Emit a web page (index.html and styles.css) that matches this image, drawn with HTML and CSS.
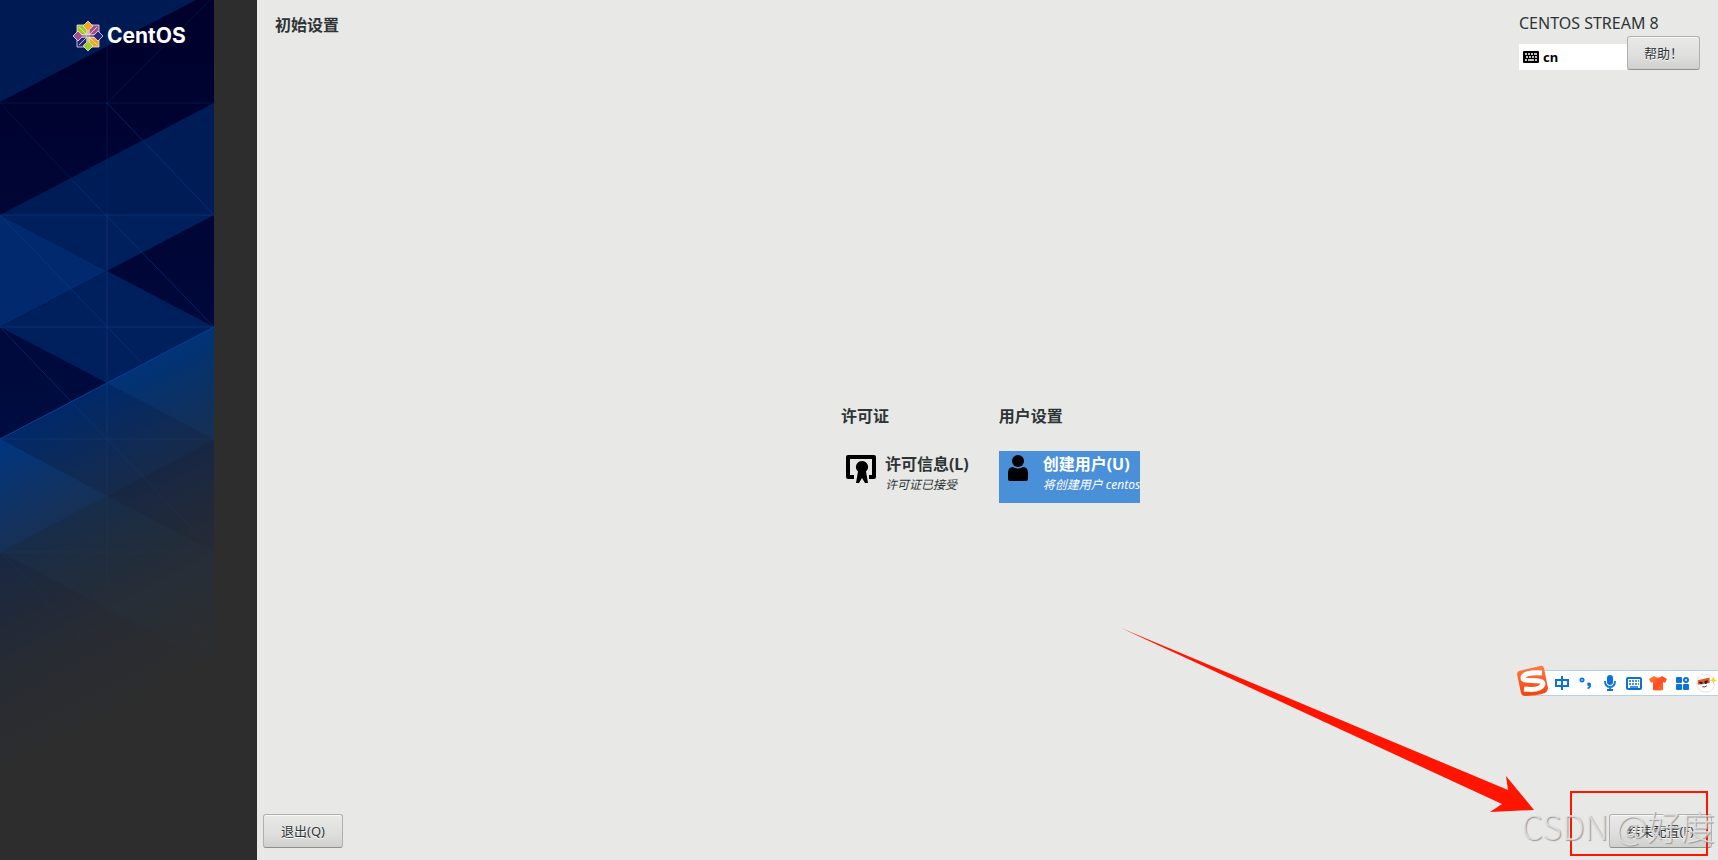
FILE: index.html
```html
<!DOCTYPE html>
<html lang="zh-CN">
<head>
    <meta charset="UTF-8">
    <meta name="viewport" content="width=device-width, initial-scale=1.0">
    <title>初始设置</title>
    <link rel="stylesheet" href="styles.css">
</head>
<body>
    <div class="app">
        <aside class="sidebar">
            <svg class="sidebar-art" viewBox="0 0 214 767" preserveAspectRatio="none" aria-hidden="true">
                <defs>
                    <linearGradient id="fade" gradientUnits="userSpaceOnUse" x1="100" y1="387" x2="239" y2="653">
                        <stop offset="0" stop-color="#2d2d2d" stop-opacity="0"/>
                        <stop offset="0.27" stop-color="#2d2d2d" stop-opacity="0.42"/>
                        <stop offset="0.5" stop-color="#2d2d2d" stop-opacity="0.7"/>
                        <stop offset="0.7" stop-color="#2d2d2d" stop-opacity="0.87"/>
                        <stop offset="1" stop-color="#2d2d2d"/>
                    </linearGradient>
                    <linearGradient id="night" x1="0" y1="0" x2="0" y2="1">
                        <stop offset="0" stop-color="#00002b"/>
                        <stop offset="1" stop-color="#000c40"/>
                    </linearGradient>
                </defs>
                <rect width="214" height="440" fill="url(#night)"/>
                <path fill="#001b53" d="M0 0H196L0 102z"/>
                <path fill="#001c57" d="M0 215L214 103V215z"/>
                <path fill="#001f5d" d="M0 215H214L107 271z"/>
                <path fill="#002a6d" d="M0 215L107 271L0 327z"/>
                <path fill="#001f5d" d="M0 327L107 271L214 327L107 383z"/>
                <path fill="#003377" d="M0 439L214 327V767H0z"/>
                <path fill="#002969" d="M0 439L107 383L214 439L107 496z"/>
                <path fill="#00205a" d="M107 496L214 439V552z"/>
                <path fill="#003580" d="M0 439L107 496L0 552z"/>
                <path fill="#002c66" d="M0 552L107 496L214 552L107 608z"/>
                <path fill="#00205a" d="M0 552L214 664V767H0z"/>
                <g fill="none" stroke="#0b4089" stroke-opacity="0.5">
                    <path d="M107 215V608M0 215H214M0 327H214M0 439H214M0 552H214"/>
                    <path d="M107 103L214 215M72 180L214 327M0 215L142 363M0 327L107 439L214 552M0 552L107 664"/>
                    <path stroke-opacity="0.25" d="M107 40V215M0 103H214M0 103L72 180M107 103L210 0"/>
                </g>
                <path fill="none" stroke="#0b4191" d="M0 439L214 327"/>
                <path fill="url(#fade)" d="M0 439L214 327V767H0z"/>
            </svg>
            <div class="brand">
                <svg class="brand-mark" viewBox="0 0 32 32" aria-hidden="true">
                    <g stroke="#efe3ee" stroke-width="0.8">
                        <path fill="#9ccd2a" d="M5 5H15V15H5z"/>
                        <path fill="#a14f8c" d="M17 5H27V15H17z"/>
                        <path fill="#262577" d="M5 17H15V27H5z"/>
                        <path fill="#efa724" d="M17 17H27V27H17z"/>
                        <path fill="#efa724" d="M16 1L21 6L17 10V15H15V10L11 6z"/>
                        <path fill="#262577" d="M31 16L26 21L22 17H17V15H22L26 11z"/>
                        <path fill="#9ccd2a" d="M16 31L11 26L15 22V17H17V22L21 26z"/>
                        <path fill="#a14f8c" d="M1 16L6 11L10 15H15V17H10L6 21z"/>
                        <path fill="none" d="M7 7L14 14M25 7L18 14M7 25L14 18M25 25L18 18"/>
                    </g>
                </svg>
                <span class="brand-name">CentOS</span>
            </div>
        </aside>

        <main class="main">
            <header class="header">
                <h1 class="title">初始设置</h1>
                <div class="header-side">
                    <div class="distro">CENTOS STREAM 8</div>
                    <div class="header-tools">
                        <div class="layout-indicator">
                            <svg width="16" height="12" viewBox="0 0 16 12" aria-hidden="true">
                                <rect width="16" height="12" rx="1"/>
                                <path stroke="#fff" stroke-width="1.6" d="M2 3H4M5 3H7M8 3H10M11 3H14M3 6H5M6 6H8M9 6H11M12 6H14M2 9H4M5 9H11M12 9H14"/>
                            </svg>
                            <span>cn</span>
                        </div>
                        <button type="button" class="btn">帮助！</button>
                    </div>
                </div>
            </header>

            <div class="hub">
                <section class="category">
                    <h2>许可证</h2>
                    <button type="button" class="spoke">
                        <svg class="spoke-icon" viewBox="0 0 32 32" aria-hidden="true">
                            <path d="M3 2H29Q31 2 31 4V24Q31 26 29 26H24V22H27V6H5V22H9V26H3Q1 26 1 24V4Q1 2 3 2z"/>
                            <path d="M17 8a6 6 0 0 1 4 10.500L23 30H20L17 25L14 30H11L13 18.500A6 6 0 0 1 17 8z"/>
                        </svg>
                        <span class="spoke-text">
                            <span class="spoke-title">许可信息(L)</span>
                            <span class="spoke-status">许可证已接受</span>
                        </span>
                    </button>
                </section>
                <section class="category">
                    <h2>用户设置</h2>
                    <button type="button" class="spoke selected">
                        <svg class="spoke-icon" viewBox="0 0 32 32" aria-hidden="true">
                            <circle cx="15" cy="8" r="6"/>
                            <path d="M5 20Q5 14 10 14Q15 17 20 14Q25 14 25 20V26Q25 28 23 28H7Q5 28 5 26z"/>
                        </svg>
                        <span class="spoke-text">
                            <span class="spoke-title">创建用户(U)</span>
                            <span class="spoke-status">将创建用户 centos</span>
                        </span>
                    </button>
                </section>
            </div>

            <footer class="footer">
                <button type="button" class="btn">退出(Q)</button>
                <button type="button" class="btn">结束配置(F)</button>
            </footer>
        </main>
    </div>

    <!-- input method toolbar -->
    <div class="ime">
        <svg class="ime-logo" viewBox="0 0 34 32" aria-hidden="true">
            <defs>
                <linearGradient id="ime-red" x1="0" y1="0" x2="0" y2="1">
                    <stop offset="0" stop-color="#ff7a45"/>
                    <stop offset="1" stop-color="#f5420b"/>
                </linearGradient>
                <linearGradient id="ime-shirt" x1="0" y1="0" x2="1" y2="1">
                    <stop offset="0" stop-color="#ff8a2a"/>
                    <stop offset="0.5" stop-color="#ff4a2a"/>
                    <stop offset="1" stop-color="#ff7a1a"/>
                </linearGradient>
            </defs>
            <path fill="url(#ime-red)" d="M3 6L24 1Q27 0 28 3L32 23Q32 26 29 28Q20 31 9 31Q6 31 5 28L1 9Q1 7 3 6z"/>
            <path fill="none" stroke="#fff" stroke-width="5" d="M26 8Q7 7 7 13C7 18 27 13 27 19Q25 26 8 24"/>
        </svg>
        <button type="button" class="ime-btn" aria-label="中文">
            <svg viewBox="0 0 16 16"><path fill="none" stroke="#0b72d8" stroke-width="2" d="M2 5H14V11H2zM8 1V15"/></svg>
        </button>
        <button type="button" class="ime-btn" aria-label="标点">
            <svg viewBox="0 0 16 16"><circle cx="4" cy="5" r="1.700" fill="none" stroke="#0b72d8" stroke-width="1.800"/><path fill="#0b72d8" d="M9 9a2 2 0 1 1 4 1Q13 13 10 14L9 13Q11 12 11 11Q9 11 9 9z"/></svg>
        </button>
        <button type="button" class="ime-btn" aria-label="语音">
            <svg viewBox="0 0 16 16"><rect x="5" y="0" width="6" height="10" rx="3" fill="#0b72d8"/><path fill="none" stroke="#0b72d8" stroke-width="1.800" d="M3 6Q3 12 8 12Q13 12 13 6M8 12V16M5 15H11"/></svg>
        </button>
        <button type="button" class="ime-btn" aria-label="键盘">
            <svg viewBox="0 0 16 16"><rect x="1" y="3" width="14" height="11" rx="1" fill="#fff" stroke="#0b72d8" stroke-width="2"/><path stroke="#0b72d8" stroke-width="1.600" d="M3 6H5M6 6H8M9 6H11M12 6H13M3 9H5M6 9H8M9 9H11M12 9H13M4 12H12"/></svg>
        </button>
        <button type="button" class="ime-btn" aria-label="皮肤">
            <svg class="ime-wide" viewBox="0 0 18 16"><path fill="url(#ime-shirt)" d="M5 1Q9 4 13 1L18 4L16 8L14 7V15Q9 16 4 15V7L2 8L0 4z"/></svg>
        </button>
        <button type="button" class="ime-btn" aria-label="工具箱">
            <svg viewBox="0 0 16 16"><g fill="#0b72d8"><rect x="2" y="2" width="6" height="6" rx="1"/><rect x="2" y="9" width="6" height="6" rx="1"/><rect x="9" y="9" width="6" height="6" rx="1"/></g><circle cx="12" cy="5" r="2" fill="none" stroke="#0b72d8" stroke-width="2"/></svg>
        </button>
        <button type="button" class="ime-btn" aria-label="智能助手">
            <svg class="ime-avatar" viewBox="0 0 24 22"><path fill="#fff" stroke="#e6dede" d="M4 4L7 1L10 3Q14 0 18 4Q22 8 21 14Q19 21 12 21Q3 21 2 13Q1 8 4 4z"/><path fill="#e2582a" d="M3 8L16 5V11Q9 12 3 13z"/><path fill="#222" d="M4 10L8 9.500L8 12.500Q5 12 4 10zM10 9L14 8Q14 12 11 12z"/><path fill="none" stroke="#333" d="M8 15Q11 16 13 14"/><path fill="#ffd21c" d="M20 4L21 7L24 8L21 9L20 12L19 9L16 8L19 7z"/></svg>
        </button>
    </div>

    <!-- annotations -->
    <svg class="arrow" width="414" height="188" viewBox="0 0 414 188" aria-hidden="true">
        <path fill="#ff1500" d="M1 2L388 164L386 150L414 184L370 186L382 178z"/>
    </svg>
    <div class="highlight"></div>
    <div class="watermark">CSDN @好度</div>
</body>
</html>
```

FILE: styles.css
```css
* {
    box-sizing: border-box;
}
body {
    margin: 0;
    font-family: "Noto Sans", "Noto Sans CJK SC", sans-serif;
    font-size: 13px;
    color: #2e3436;
    background-color: #e8e8e6;
    overflow: hidden;
}
button {
    font-family: inherit;
    color: inherit;
    cursor: pointer;
}
h1, h2 {
    margin: 0;
    font-size: 16px;
    line-height: 24px;
    font-weight: bold;
}
.app {
    display: flex;
    min-height: 100vh;
}

/* sidebar */
.sidebar {
    display: grid;
    grid-template-rows: auto 1fr;
    align-items: start;
    flex: 0 0 257px;
    background-color: #2d2d2d;
}
.sidebar-art {
    grid-area: 1 / 1 / 3 / 2;
    width: 214px;
    height: 767px;
}
.brand {
    grid-area: 1 / 1;
    display: flex;
    align-items: center;
    gap: 3px;
    padding: 20px 0 0 72px;
    z-index: 1;
}
.brand-mark {
    width: 32px;
    height: 32px;
}
.brand-name {
    font-family: Inter, sans-serif;
    font-size: 21px;
    line-height: 32px;
    font-weight: 700;
    color: #ffffff;
}

/* main */
.main {
    display: flex;
    flex: 1;
    flex-direction: column;
    min-width: 0;
}
.header {
    display: flex;
    justify-content: space-between;
    padding: 13px 18px 0;
}
.distro {
    font-size: 16px;
    line-height: 20px;
}
.header-tools {
    display: flex;
    align-items: flex-end;
    margin-top: 3px;
}
.layout-indicator {
    display: flex;
    align-items: center;
    gap: 4px;
    width: 108px;
    height: 26px;
    padding: 0 4px;
    font-weight: bold;
    color: #000000;
    background-color: #ffffff;
}
.btn {
    height: 34px;
    padding: 0 16px;
    font-size: 13px;
    line-height: 20px;
    white-space: nowrap;
    text-shadow: 0 1px #ffffff;
    background-image: linear-gradient(#e9e9e8, #dededd 60%, #d0d0ce);
    border: 1px solid #b0b0ae;
    border-bottom-color: #8f8f8d;
    border-radius: 3px;
    box-shadow: inset 0 1px #f8f8f8;
}

/* hub */
.hub {
    display: flex;
    flex: 1;
    align-items: center;
    justify-content: center;
    gap: 30px;
    padding: 22px 0 0 6px;
}
.category h2 {
    margin-bottom: 23px;
}
.spoke {
    display: flex;
    align-items: flex-start;
    gap: 8px;
    height: 52px;
    padding: 2px 0 0 4px;
    text-align: left;
    background: none;
    border: 0;
}
.spoke.selected {
    color: #ffffff;
    background-color: #4a90d9;
}
.spoke-icon {
    width: 32px;
    height: 32px;
    fill: #000000;
}
.spoke-text {
    display: flex;
    flex-direction: column;
}
.spoke-title {
    font-size: 16px;
    line-height: 22px;
    font-weight: bold;
}
.spoke-status {
    font-size: 12px;
    line-height: 20px;
    font-style: italic;
}

.footer {
    display: flex;
    justify-content: space-between;
    padding: 0 6px 12px;
}
.footer .btn {
    padding: 0 17px;
}

/* input method toolbar */
.ime {
    position: absolute;
    right: 0;
    bottom: 164px;
    display: flex;
    align-items: center;
    height: 26px;
    background-color: #ffffff;
    border: 1px solid #b9cfe8;
    border-right: 0;
}
.ime-logo {
    width: 34px;
    height: 32px;
    margin: -4px 0 0 -18px;
}
.ime-btn {
    display: flex;
    align-items: center;
    justify-content: center;
    width: 24px;
    height: 24px;
    padding: 0;
    background: none;
    border: 0;
}
.ime-btn svg {
    flex: none;
    width: 16px;
    height: 16px;
}
.ime-btn .ime-wide {
    width: 18px;
}
.ime-btn .ime-avatar {
    width: 22px;
    height: 22px;
}

/* annotations */
.arrow {
    position: absolute;
    right: 184px;
    bottom: 46px;
    pointer-events: none;
}
.highlight {
    position: absolute;
    right: 10px;
    bottom: 4px;
    width: 138px;
    height: 65px;
    border: 2px solid #ff1500;
    pointer-events: none;
}
.watermark {
    position: absolute;
    right: 3px;
    bottom: 12px;
    font-family: "Noto Sans CJK SC", sans-serif;
    font-size: 34px;
    line-height: 44px;
    font-weight: 300;
    white-space: nowrap;
    color: rgba(232, 232, 232, 0.8);
    text-shadow: 1px 1px 1px #999999;
    pointer-events: none;
}
```
